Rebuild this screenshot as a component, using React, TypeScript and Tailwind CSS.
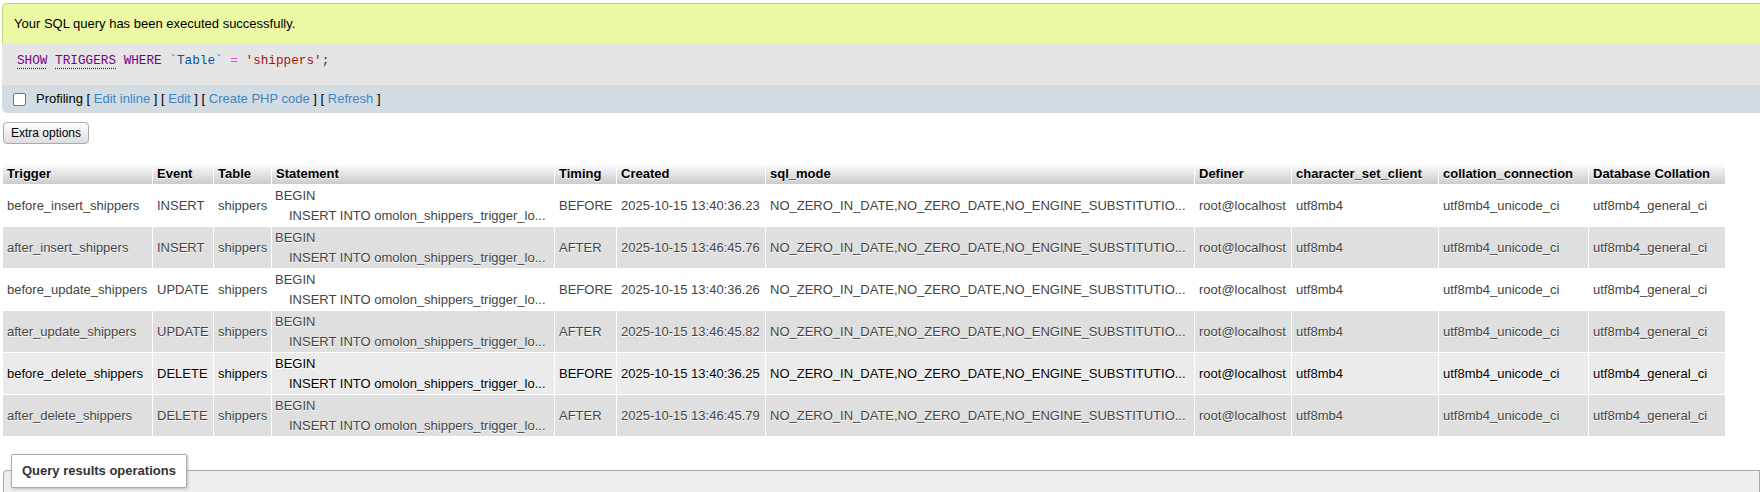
const rows = [
  ['before_insert_shippers', 'INSERT', 'BEFORE', '2025-10-15 13:40:36.23'],
  ['after_insert_shippers', 'INSERT', 'AFTER', '2025-10-15 13:46:45.76'],
  ['before_update_shippers', 'UPDATE', 'BEFORE', '2025-10-15 13:40:36.26'],
  ['after_update_shippers', 'UPDATE', 'AFTER', '2025-10-15 13:46:45.82'],
  ['before_delete_shippers', 'DELETE', 'BEFORE', '2025-10-15 13:40:36.25'],
  ['after_delete_shippers', 'DELETE', 'AFTER', '2025-10-15 13:46:45.79'],
];

const headers = [
  'Trigger',
  'Event',
  'Table',
  'Statement',
  'Timing',
  'Created',
  'sql_mode',
  'Definer',
  'character_set_client',
  'collation_connection',
  'Database Collation',
];

function Link({ children }: { children: string }) {
  return (
    <>
      [ <span className="text-[#3f84c2]">{children}</span> ]
    </>
  );
}

export default function App() {
  return (
    <div className="h-[492px] overflow-hidden bg-white pt-[3px] font-['Liberation_Sans',Arial,sans-serif] text-[13px] text-[#444]">
      {/* query result message */}
      <div className="ml-[2px]">
        <div className="flex h-[40px] items-center rounded-tl-[5px] border-t border-l border-[#b6d77a] bg-[#ebf8a4] pl-[11px] text-black">
          Your SQL query has been executed successfully.
        </div>
        <div className="h-[42px] bg-[#e5e5e5] pl-[15px] pt-[10px] font-['Liberation_Mono',monospace] text-[12.7px] leading-[15px]">
          <span className="text-[#770088] underline decoration-dotted decoration-[#333] underline-offset-[4px]">SHOW</span>{' '}
          <span className="text-[#770088] underline decoration-dotted decoration-[#333] underline-offset-[4px]">TRIGGERS</span>{' '}
          <span className="text-[#770088]">WHERE</span>{' '}
          <span className="text-[#0055aa]">`Table`</span>{' '}
          <span className="text-[#ee44dd]">=</span>{' '}
          <span className="text-[#aa1111]">'shippers'</span>
          <span className="text-[#333]">;</span>
        </div>
        <div className="flex h-[28px] items-center rounded-bl-[5px] bg-[#d3dce3] pl-[11px] text-black">
          <span className="mr-[10px] inline-block h-[13px] w-[13px] rounded-[2px] border border-[#767676] bg-white" />
          <span>
            Profiling <Link>Edit inline</Link> <Link>Edit</Link> <Link>Create PHP code</Link> <Link>Refresh</Link>
          </span>
        </div>
      </div>

      <div className="ml-[3px] mt-[9px] flex h-[22px] w-[86px] items-center justify-center rounded-[4px] border border-[#aaa] bg-linear-to-b from-white to-[#ddd] text-[12px] text-black">
        Extra options
      </div>

      {/* triggers table */}
      <table className="ml-[2px] mt-[18px] w-[1724px] table-fixed border-separate border-spacing-[1px] [text-shadow:0_1px_0_#fff]">
        <colgroup>
          <col className="w-[149px]" />
          <col className="w-[60px]" />
          <col className="w-[57px]" />
          <col className="w-[282px]" />
          <col className="w-[61px]" />
          <col className="w-[148px]" />
          <col className="w-[428px]" />
          <col className="w-[96px]" />
          <col className="w-[146px]" />
          <col className="w-[149px]" />
          <col className="w-[136px]" />
        </colgroup>
        <thead>
          <tr>
            {headers.map((h) => (
              <th
                key={h}
                className="h-[21px] whitespace-nowrap bg-linear-to-b from-white to-[#ccc] px-[4px] text-left font-bold text-black"
              >
                {h}
              </th>
            ))}
          </tr>
        </thead>
        <tbody>
          {rows.map((r, i) => {
            const hover = i === 4;
            const bg = hover ? 'bg-[#ebebeb] text-black' : i % 2 === 0 ? 'bg-white' : 'bg-[#dfdfdf]';
            return (
              <tr key={r[0]} className={bg}>
                <td className="h-[41px] whitespace-nowrap px-[4px] align-middle">{r[0]}</td>
                <td className="whitespace-nowrap px-[4px] align-middle">{r[1]}</td>
                <td className="whitespace-nowrap px-[4px] align-middle">shippers</td>
                <td className="whitespace-nowrap px-[3px] align-middle leading-[20px]">
                  <div>BEGIN</div>
                  <div className="pl-[14px]">INSERT INTO omolon_shippers_trigger_lo...</div>
                </td>
                <td className="whitespace-nowrap px-[4px] align-middle">{r[2]}</td>
                <td className="whitespace-nowrap px-[4px] align-middle">{r[3]}</td>
                <td className="whitespace-nowrap px-[4px] align-middle">
                  NO_ZERO_IN_DATE,NO_ZERO_DATE,NO_ENGINE_SUBSTITUTIO...
                </td>
                <td className="whitespace-nowrap px-[4px] align-middle">root@localhost</td>
                <td className="whitespace-nowrap px-[4px] align-middle">utf8mb4</td>
                <td className="whitespace-nowrap px-[4px] align-middle">utf8mb4_unicode_ci</td>
                <td className="whitespace-nowrap px-[4px] align-middle">utf8mb4_general_ci</td>
              </tr>
            );
          })}
        </tbody>
      </table>

      {/* query results operations */}
      <fieldset className="ml-[3px] mt-[17px] h-[80px] rounded-tl-[4px] border border-[#aaa] bg-[#eee] px-[7px]">
        <legend className="rounded-[2px] border border-[#aaa] bg-white px-[10px] py-[6px] font-bold text-[#333] shadow-[1px_1px_3px_#bbb]">
          Query results operations
        </legend>
      </fieldset>
    </div>
  );
}
